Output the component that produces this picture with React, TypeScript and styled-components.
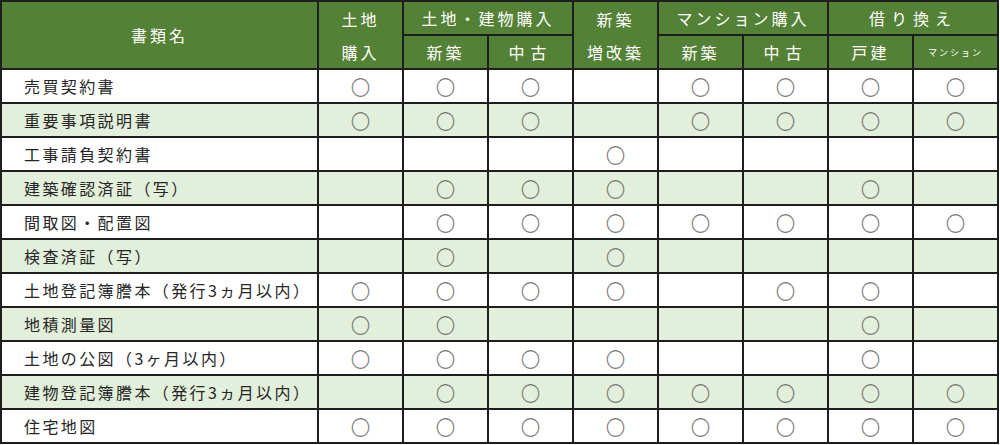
import React from "react";
import styled, { createGlobalStyle } from "styled-components";

const GlobalStyle = createGlobalStyle`
  html, body { margin: 0; padding: 0; background: #ffffff; }
  body { font-family: "Noto Sans CJK JP", "Noto Sans", sans-serif; }
`;

const GREEN = "#538135";
const LIGHT = "#e2efda";
const LINE = "#1e1e1e";

const Table = styled.table`
  border-collapse: collapse;
  table-layout: fixed;
  width: 998px;
  margin: 0;
  font-family: "Noto Sans CJK JP", "Noto Sans", sans-serif;
  border: 2px solid ${LINE};
`;

const HeadCell = styled.th<{ $small?: boolean; $wide?: boolean }>`
  background: ${GREEN};
  color: #ffffff;
  font-weight: 400;
  font-size: ${(p) => (p.$small ? "9px" : "16px")};
  letter-spacing: ${(p) => (p.$small ? "2px" : p.$wide ? "6px" : "3px")};
  text-align: center;
  height: 32px;
  padding: 0;
  border: 2px solid ${LINE};
  white-space: nowrap;
`;

const StackLabel = styled.div`
  display: flex;
  flex-direction: column;
  align-items: center;
  justify-content: space-around;
  height: 66px;
  line-height: 1;
`;

const Row = styled.tr<{ $alt: boolean }>`
  background: ${(p) => (p.$alt ? LIGHT : "#ffffff")};
`;

const NameCell = styled.td`
  height: 32px;
  padding: 0 0 0 22px;
  border: 2px solid ${LINE};
  font-size: 16px;
  letter-spacing: 2.4px;
  color: #262626;
  white-space: nowrap;
`;

const MarkCell = styled.td`
  height: 32px;
  padding: 0;
  border: 2px solid ${LINE};
  text-align: center;
  font-size: 19px;
  line-height: 1;
  color: #6f6f6f;
  -webkit-text-stroke: 0.3px #6f6f6f;
`;

type RowData = { name: string; marks: number[] };

const rows: RowData[] = [
  { name: "売買契約書", marks: [1, 1, 1, 0, 1, 1, 1, 1] },
  { name: "重要事項説明書", marks: [1, 1, 1, 0, 1, 1, 1, 1] },
  { name: "工事請負契約書", marks: [0, 0, 0, 1, 0, 0, 0, 0] },
  { name: "建築確認済証（写）", marks: [0, 1, 1, 1, 0, 0, 1, 0] },
  { name: "間取図・配置図", marks: [0, 1, 1, 1, 1, 1, 1, 1] },
  { name: "検査済証（写）", marks: [0, 1, 0, 1, 0, 0, 0, 0] },
  { name: "土地登記簿謄本（発行3ヵ月以内）", marks: [1, 1, 1, 1, 0, 1, 1, 0] },
  { name: "地積測量図", marks: [1, 1, 0, 0, 0, 0, 1, 0] },
  { name: "土地の公図（3ヶ月以内）", marks: [1, 1, 1, 1, 0, 0, 1, 0] },
  { name: "建物登記簿謄本（発行3ヵ月以内）", marks: [0, 1, 1, 1, 1, 1, 1, 1] },
  { name: "住宅地図", marks: [1, 1, 1, 1, 1, 1, 1, 1] },
];

export default function App() {
  return (
    <>
      <GlobalStyle />
      <Table>
        <colgroup>
          <col style={{ width: 317 }} />
          {Array.from({ length: 8 }).map((_, i) => (
            <col key={i} style={{ width: 85 }} />
          ))}
        </colgroup>
        <thead>
          <tr>
            <HeadCell rowSpan={2}>書類名</HeadCell>
            <HeadCell rowSpan={2}>
              <StackLabel>
                <span>土地</span>
                <span>購入</span>
              </StackLabel>
            </HeadCell>
            <HeadCell colSpan={2}>土地・建物購入</HeadCell>
            <HeadCell rowSpan={2}>
              <StackLabel>
                <span>新築</span>
                <span>増改築</span>
              </StackLabel>
            </HeadCell>
            <HeadCell colSpan={2}>マンション購入</HeadCell>
            <HeadCell colSpan={2} $wide>
              借り換え
            </HeadCell>
          </tr>
          <tr>
            <HeadCell>新築</HeadCell>
            <HeadCell $wide>中古</HeadCell>
            <HeadCell>新築</HeadCell>
            <HeadCell $wide>中古</HeadCell>
            <HeadCell>戸建</HeadCell>
            <HeadCell $small>マンション</HeadCell>
          </tr>
        </thead>
        <tbody>
          {rows.map((r, i) => (
            <Row key={r.name} $alt={i % 2 === 1}>
              <NameCell>{r.name}</NameCell>
              {r.marks.map((m, j) => (
                <MarkCell key={j}>{m ? "○" : null}</MarkCell>
              ))}
            </Row>
          ))}
        </tbody>
      </Table>
    </>
  );
}
